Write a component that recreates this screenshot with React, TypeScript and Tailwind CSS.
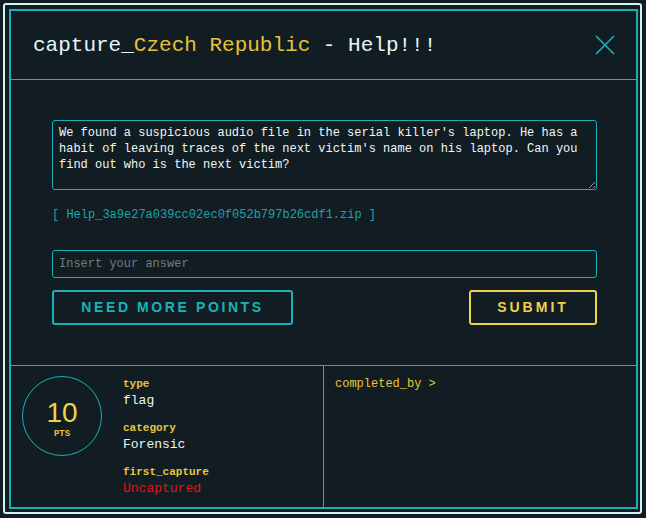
const mono = "font-['Liberation_Mono','Courier_New',monospace]";

function Field({ label, value, red }: { label: string; value: string; red?: boolean }) {
  return (
    <div className="flex flex-col">
      <span className={`${mono} text-[11px] leading-[14px] font-bold text-[#e8c53a]`}>{label}</span>
      <span className={`${mono} text-[13px] leading-[16px] mt-[2px] ${red ? 'text-[#e81010]' : 'text-[#eaf6f6]'}`}>
        {value}
      </span>
    </div>
  );
}

export default function App() {
  return (
    <div className="w-[646px] h-[518px] bg-[#111d23] pl-[3px] pt-[3px]">
      <div className="w-[639px] h-[511px] border-2 border-[#d4f1f1] rounded-[3px] pl-1 pt-1 pr-0.5 pb-[3px]">
        <div className="w-full h-full border-2 border-[#1cb1b8] flex flex-col">
          {/* header */}
          <div className="h-[69px] shrink-0 border-b border-[#1cb1b8] flex items-center justify-between pl-[22px] pr-[20px]">
            <h1 className={`${mono} text-[21px] leading-none text-[#e6f6f6]`}>
              capture_<span className="text-[#e6c13a]">Czech Republic</span> - Help!!!
            </h1>
            <button className="w-[22px] h-[22px] text-[#1cb1b8]">
              <svg viewBox="0 0 22 22" className="w-full h-full" fill="none" stroke="currentColor" strokeWidth="1.6">
                <path d="M2 2 L20 20 M20 2 L2 20" />
              </svg>
            </button>
          </div>

          {/* body */}
          <div className="h-[285px] shrink-0 pl-[41px] pr-[39px] pt-[40px] flex flex-col">
            <textarea
              readOnly
              defaultValue="We found a suspicious audio file in the serial killer's laptop. He has a habit of leaving traces of the next victim's name on his laptop. Can you find out who is the next victim?"
              className={`${mono} w-full h-[70px] bg-transparent border border-[#1cb1b8] rounded-[3px] px-[6px] py-[4px] text-[12px] leading-[16px] text-[#eef8f8] outline-none`}
            />
            <a className={`${mono} mt-[18px] text-[12px] leading-[14px] text-[#1ca4ac]`}>
              [ Help_3a9e27a039cc02ec0f052b797b26cdf1.zip ]
            </a>
            <input
              placeholder="Insert your answer"
              className={`${mono} mt-[28px] w-full h-[28px] bg-transparent border border-[#1cb1b8] rounded-[3px] px-[6px] text-[12px] text-[#e6f4f4] placeholder:text-[#6f7d80] outline-none`}
            />
            <div className="mt-[12px] flex justify-between">
              <button className="w-[241px] h-[35px] border-2 border-[#1cb1b8] rounded-[3px] font-['Liberation_Sans',Arial,sans-serif] font-bold text-[14px] tracking-[2.6px] text-[#1cb1b8]">
                NEED MORE POINTS
              </button>
              <button className="w-[128px] h-[35px] border-2 border-[#efd248] rounded-[3px] font-['Liberation_Sans',Arial,sans-serif] font-bold text-[14px] tracking-[3px] text-[#efd248]">
                SUBMIT
              </button>
            </div>
          </div>

          {/* footer */}
          <div className="flex-1 border-t border-[#1cb1b8] flex">
            <div className="w-[313px] border-r border-[#1cb1b8] flex pl-[11px] pt-[10px]">
              <div className="w-[80px] h-[80px] rounded-full border border-[#1cb1b8] flex flex-col items-center justify-center">
                <span className="font-['Liberation_Sans',Arial,sans-serif] text-[28px] leading-[30px] text-[#efd248] mt-[4px]">10</span>
                <span className={`${mono} text-[9px] leading-[10px] font-bold text-[#e8c53a] mt-[1px]`}>PTS</span>
              </div>
              <div className="ml-[21px] pt-[1px] flex flex-col gap-[12px]">
                <Field label="type" value="flag" />
                <Field label="category" value="Forensic" />
                <Field label="first_capture" value="Uncaptured" red />
              </div>
            </div>
            <div className="flex-1 pl-[11px] pt-[11px]">
              <p className={`${mono} text-[12px] leading-[14px] text-[#e8c53a]`}>completed_by &gt;</p>
            </div>
          </div>
        </div>
      </div>
    </div>
  );
}
